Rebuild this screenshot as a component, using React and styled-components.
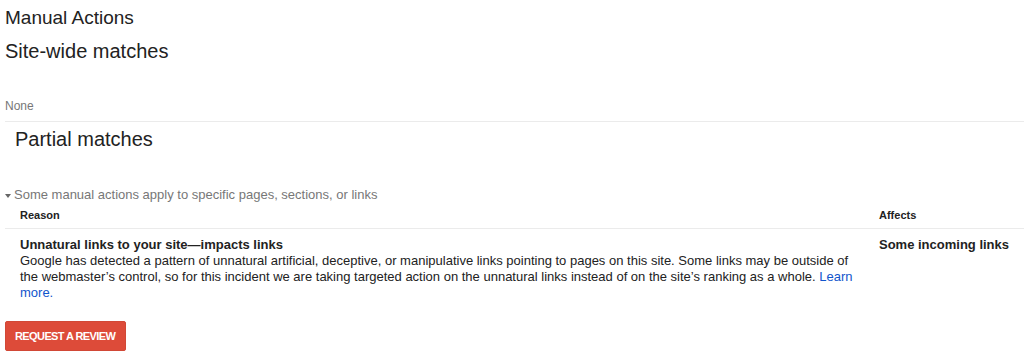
import React from 'react';
import styled, { createGlobalStyle } from 'styled-components';

const GlobalStyle = createGlobalStyle`
    html, body {
        margin: 0;
        padding: 0;
        background: #fff;
    }
    body {
        font-family: "Liberation Sans", Arial, sans-serif;
        color: #222;
    }
`;

const Page = styled.div`
    padding: 7px 0 0 5px;
`;

const PageTitle = styled.h1`
    margin: 0;
    font-size: 19px;
    line-height: 22px;
    font-weight: normal;
    color: #222;
`;

const SectionTitle = styled.h2`
    margin: ${props => props.top}px 0 0;
    padding-left: ${props => props.indent || 0}px;
    font-size: 20px;
    line-height: 24px;
    font-weight: normal;
    color: #222;
`;

const EmptyNote = styled.div`
    margin-top: 35px;
    padding-bottom: 7px;
    border-bottom: 1px solid #ebebeb;
    font-size: 12px;
    line-height: 16px;
    color: #777;
`;

const Summary = styled.div`
    margin-top: 36px;
    display: flex;
    align-items: center;
    gap: 3px;
    font-size: 13px;
    line-height: 16px;
    color: #777;
`;

const Caret = styled.span`
    width: 0;
    height: 0;
    border-left: 3.5px solid transparent;
    border-right: 3.5px solid transparent;
    border-top: 4px solid #666;
    margin-top: 1px;
`;

const Table = styled.div`
    display: grid;
    grid-template-columns: 874px 1fr;
`;

const HeadCell = styled.div`
    padding: 5px 0 6px;
    padding-left: ${props => props.first ? '15px' : '0'};
    border-bottom: 1px solid #ebebeb;
    font-size: 11px;
    line-height: 14px;
    font-weight: bold;
    color: #222;
`;

const Cell = styled.div`
    padding: 8px ${props => props.first ? '15px' : '0'} 0;
    font-size: 13px;
    line-height: 16px;
    color: #222;
`;

const Strong = styled.div`
    font-weight: bold;
`;

const Link = styled.a`
    color: #1155cc;
    text-decoration: none;
`;

const ReviewButton = styled.button`
    margin-top: 20px;
    height: 30px;
    padding: 0 10px 0 9px;
    border: 1px solid #d14836;
    border-radius: 2px;
    background: #dd4b39;
    color: #fff;
    font-family: "Liberation Sans", Arial, sans-serif;
    font-size: 11px;
    font-weight: bold;
    letter-spacing: -0.6px;
    text-transform: uppercase;
    cursor: pointer;
`;

export default function App() {
    return (
        <Page>
            <GlobalStyle />
            <PageTitle>Manual Actions</PageTitle>
            <SectionTitle top={10}>Site-wide matches</SectionTitle>
            <EmptyNote>None</EmptyNote>

            <SectionTitle top={5} indent={10}>Partial matches</SectionTitle>
            <Summary>
                <Caret />
                Some manual actions apply to specific pages, sections, or links
            </Summary>

            <Table>
                <HeadCell first>Reason</HeadCell>
                <HeadCell>Affects</HeadCell>
                <Cell first>
                    <Strong>Unnatural links to your site—impacts links</Strong>
                    Google has detected a pattern of unnatural artificial, deceptive, or manipulative links pointing to pages on this site. Some links may be outside of the webmaster’s control, so for this incident we are taking targeted action on the unnatural links instead of on the site’s ranking as a whole. <Link href="#">Learn more.</Link>
                </Cell>
                <Cell>
                    <Strong>Some incoming links</Strong>
                </Cell>
            </Table>

            <ReviewButton>Request a review</ReviewButton>
        </Page>
    );
}
